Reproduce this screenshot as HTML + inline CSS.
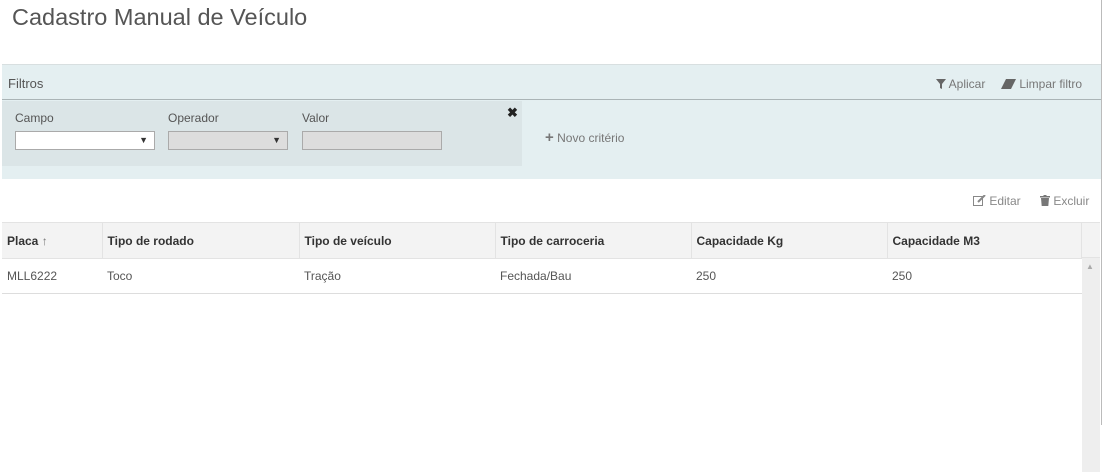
<!DOCTYPE html>
<html><head><meta charset="utf-8"><style>
*{box-sizing:border-box;margin:0;padding:0}
body{width:1102px;height:472px;background:#fff;font-family:"Liberation Sans",sans-serif;font-size:12px;color:#555;position:relative;overflow:hidden}
.abs{position:absolute}
h1{position:absolute;left:12px;top:4px;font-weight:normal;font-size:23.5px;color:#555}
.filt{left:2px;top:64px;width:1100px;height:115px;background:#e4eff1;border-top:1px solid #d8dfe0}
.fh{left:0;top:0;width:1100px;height:35px;border-bottom:1px solid #aab4b6}
.crit{left:0;top:36px;width:520px;height:65px;background:#dbe5e7}
.sel{height:19px;border:1px solid #aaa;background:#fff}
.sel span{position:absolute;right:6px;top:3px;font-size:9px;color:#333}
table{position:absolute;left:2px;top:222px;width:1080px;border-collapse:collapse;font-size:12px}
th{background:#f3f3f3;text-align:left;font-weight:bold;color:#333;height:36px;padding-left:5px;border-top:1px solid #e3e3e3;border-bottom:1px solid #e3e3e3;border-right:1px solid #e3e3e3}
td{height:35px;padding-left:5px;border-bottom:1px solid #ddd;color:#555}
</style></head><body>
<h1>Cadastro Manual de Veículo</h1>
<div class="abs filt">
 <div class="abs fh"><span class="abs" style="left:6px;top:11px;font-size:13px">Filtros</span>
  <span class="abs" style="left:934px;top:12px;color:#777">
   <svg width="10" height="10" viewBox="0 0 10 10" style="vertical-align:-1px"><path d="M0 0H10L6 5V10L4 9V5Z" fill="#666"/></svg> Aplicar</span>
  <span class="abs" style="left:999px;top:12px;color:#777">
   <svg width="15" height="10" viewBox="0 0 15 10" style="vertical-align:-1px"><path d="M5 0H15L10 10H0Z" fill="#666"/></svg> Limpar filtro</span>
 </div>
 <div class="abs crit">
  <span class="abs" style="left:13px;top:10px">Campo</span>
  <span class="abs" style="left:166px;top:10px">Operador</span>
  <span class="abs" style="left:300px;top:10px">Valor</span>
  <span class="abs" style="left:505px;top:4px;font-size:13px;font-weight:bold;color:#222">✖</span>
  <div class="abs sel" style="left:13px;top:30px;width:140px"><span>▼</span></div>
  <div class="abs sel" style="left:166px;top:30px;width:120px;background:#ddd"><span>▼</span></div>
  <div class="abs sel" style="left:300px;top:30px;width:140px;background:#ddd"></div>
 </div>
 <span class="abs" style="left:543px;top:64px;color:#777"><b style="font-size:15px;color:#777">+</b> Novo critério</span>
</div>
<span class="abs" style="left:973px;top:194px;color:#888">
 <svg width="13" height="11" viewBox="0 0 13 11" style="vertical-align:-1px"><rect x=".5" y="1.5" width="9" height="9" fill="none" stroke="#888"/><path d="M5 7L12 0" stroke="#888" stroke-width="2"/></svg> Editar</span>
<span class="abs" style="left:1040px;top:194px;color:#888">
 <svg width="10" height="11" viewBox="0 0 10 11" style="vertical-align:-1px"><path d="M0 1H10V2.5H0ZM3.5 0H6.5V1H3.5ZM1 3H9L8.3 11H1.7Z" fill="#777"/></svg> Excluir</span>
<table>
<tr><th style="width:100px">Placa <span style="font-weight:normal;color:#777">↑</span></th><th style="width:197px">Tipo de rodado</th><th style="width:196px">Tipo de veículo</th><th style="width:196px">Tipo de carroceria</th><th style="width:196px">Capacidade Kg</th><th>Capacidade M3</th></tr>
<tr><td>MLL6222</td><td>Toco</td><td>Tração</td><td>Fechada/Bau</td><td>250</td><td>250</td></tr>
</table>
<div class="abs" style="left:1082px;top:222px;width:18px;height:36px;background:#f3f3f3;border-top:1px solid #e3e3e3;border-bottom:1px solid #e3e3e3"></div>
<div class="abs" style="left:1082px;top:258px;width:18px;height:214px;background:#eee"></div>
<span class="abs" style="left:1086px;top:262px;font-size:8px;color:#aaa">▲</span>
<div class="abs" style="left:1101px;top:0;width:1px;height:425px;background:#bbb"></div>
</body></html>
